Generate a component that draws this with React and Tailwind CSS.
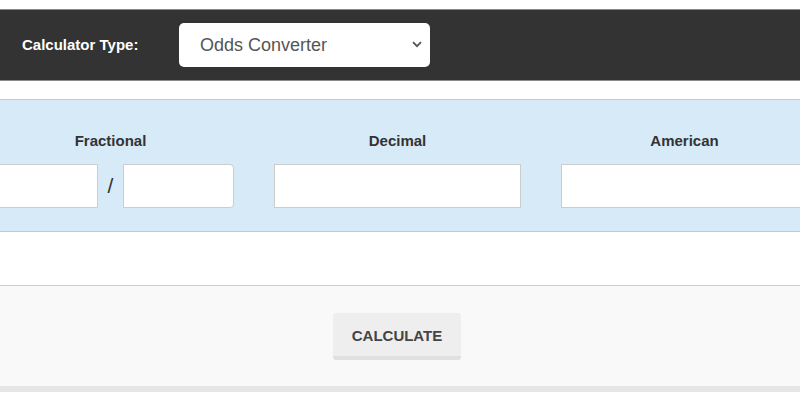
import React, { useState } from 'react';

const font = { fontFamily: '"Liberation Sans", Arial, sans-serif' };

const OddsField = ({ label, children }) => (
    <div className="w-[287px] shrink-0 px-[20px] flex flex-col items-center">
        <div className="h-[20px] leading-[20px] text-[15px] font-bold text-[#333] mb-[13px]">{label}</div>
        <div className="w-full flex items-center">{children}</div>
    </div>
);

const App = () => {
    const [type, setType] = useState('odds');
    const [num, setNum] = useState('');
    const [den, setDen] = useState('');
    const [decimal, setDecimal] = useState('');
    const [american, setAmerican] = useState('');

    return (
        <div className="w-[800px] h-[400px] overflow-hidden bg-white" style={font}>
            <div className="h-[9px]" />
            <div className="h-[72px] bg-[#333] border-t border-b border-[#8a8a8a] flex items-center pl-[22px]">
                <span className="text-white text-[15px] font-bold w-[157px]">Calculator Type:</span>
                <div className="relative w-[251px] h-[44px]">
                    <select
                        value={type}
                        onChange={e => setType(e.target.value)}
                        className="appearance-none w-full h-full bg-white rounded-[5px] pl-[21px] text-[18px] text-[#555] outline-none"
                        style={font}
                    >
                        <option value="odds">Odds Converter</option>
                        <option value="bet">Bet Calculator</option>
                    </select>
                    <svg className="absolute right-[8px] top-[18px] w-[10px] h-[7px] pointer-events-none" viewBox="0 0 10 7" fill="none" stroke="#555" strokeWidth="1.8">
                        <path d="M1 1.2l4 4 4-4" />
                    </svg>
                </div>
            </div>
            <div className="h-[18px]" />
            <div className="h-[133px] bg-[#d6eaf8] border-t border-b border-[#a7d1f3] overflow-hidden">
                <div className="flex ml-[-33px] pt-[31px]">
                    <OddsField label="Fractional">
                        <input value={num} onChange={e => setNum(e.target.value)} className="w-[111px] h-[44px] bg-white border border-[#ccc] rounded-l-[4px] outline-none px-2" />
                        <span className="w-[25px] text-center text-[21px] text-[#333]">/</span>
                        <input value={den} onChange={e => setDen(e.target.value)} className="w-[111px] h-[44px] bg-white border border-[#ccc] rounded-r-[4px] outline-none px-2" />
                    </OddsField>
                    <OddsField label="Decimal">
                        <input value={decimal} onChange={e => setDecimal(e.target.value)} className="w-full h-[44px] bg-white border border-[#ccc] outline-none px-2" />
                    </OddsField>
                    <OddsField label="American">
                        <input value={american} onChange={e => setAmerican(e.target.value)} className="w-full h-[44px] bg-white border border-[#ccc] outline-none px-2" />
                    </OddsField>
                </div>
            </div>
            <div className="h-[53px]" />
            <div className="h-[101px] bg-[#f9f9f9] border-t border-[#cdcdcd] flex justify-center pt-[27px] pr-[6px]">
                <button className="w-[128px] h-[47px] bg-[#eee] border-b-[4px] border-[#e0e0e0] rounded-[3px] text-[15px] font-bold text-[#444] pt-[3px]" style={font}>
                    CALCULATE
                </button>
            </div>
            <div className="h-[6px] bg-[#e6e6e6]" />
        </div>
    );
};

export default App;
